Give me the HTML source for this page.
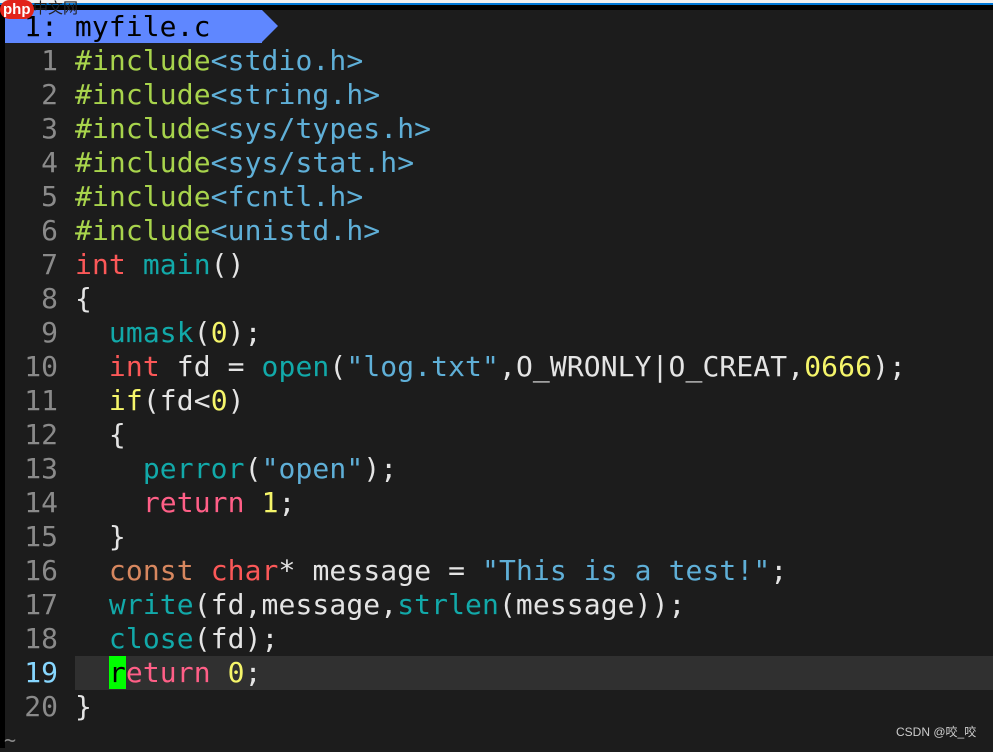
<!DOCTYPE html>
<html><head><meta charset="utf-8"><style>
body{margin:0;width:993px;height:748px;overflow:hidden;background:#1c1c1c;position:relative;font-family:"DejaVu Sans Mono","Liberation Mono",monospace;}
.top{position:absolute;left:0;top:0;width:993px;height:3px;background:#f0f0f0}
.top2{position:absolute;left:0;top:3px;width:993px;height:2px;background:#0078d7}
.top3{position:absolute;left:0;top:5px;width:993px;height:5px;background:#000}
.lb{position:absolute;left:0;top:5px;width:5px;height:743px;background:#000}
.tab{position:absolute;left:5px;top:10px;height:33px;width:257px;background:#5f87ff;color:#000;font-size:28px;line-height:33px;padding-left:19px;box-sizing:border-box;letter-spacing:0.1px}
.arr{position:absolute;left:262px;top:10px;width:0;height:0;border-top:16.5px solid transparent;border-bottom:16.5px solid transparent;border-left:16px solid #5f87ff}
.cur{position:absolute;left:75px;top:656px;width:918px;height:34px;background:#303030}
.l{position:absolute;left:0;height:34px;line-height:34px;font-size:28px;white-space:pre;color:#e4e4e4;letter-spacing:0.1px}
.n{display:inline-block;width:58px;text-align:right;color:#8a8a8a;margin-right:17px;letter-spacing:0}
.g{color:#a8d44c}.b{color:#5fafd7}.r{color:#fb5858}.t{color:#12a9a9}.y{color:#f5f56a}.p{color:#ff5f87}.o{color:#d7875f}
.logo{position:absolute;left:0;top:0;font:bold 15px "Liberation Sans",sans-serif;color:#fff;background:#e2231a;border-radius:10px;padding:0 3px;line-height:19px}
.logo2{position:absolute;left:33px;top:1px;font:15px "Liberation Sans","Noto Sans CJK SC",sans-serif;color:#222;line-height:16px}
.wm{position:absolute;left:896px;top:723px;font:12px "Liberation Sans","Noto Sans CJK SC",sans-serif;color:#ccc}
.tl{position:absolute;left:4px;top:728px;color:#888;font-size:20px}
</style></head><body>
<div class="top"></div><div class="top2"></div><div class="top3"></div><div class="lb"></div>
<div class="tab">1: myfile.c</div><div class="arr"></div>
<div class="cur"></div>
<div class="l" style="top:44px"><span class="n">1</span><span class="g">#include</span><span class="b">&lt;stdio.h&gt;</span></div>
<div class="l" style="top:78px"><span class="n">2</span><span class="g">#include</span><span class="b">&lt;string.h&gt;</span></div>
<div class="l" style="top:112px"><span class="n">3</span><span class="g">#include</span><span class="b">&lt;sys/types.h&gt;</span></div>
<div class="l" style="top:146px"><span class="n">4</span><span class="g">#include</span><span class="b">&lt;sys/stat.h&gt;</span></div>
<div class="l" style="top:180px"><span class="n">5</span><span class="g">#include</span><span class="b">&lt;fcntl.h&gt;</span></div>
<div class="l" style="top:214px"><span class="n">6</span><span class="g">#include</span><span class="b">&lt;unistd.h&gt;</span></div>
<div class="l" style="top:248px"><span class="n">7</span><span class="r">int</span> <span class="t">main</span>()</div>
<div class="l" style="top:282px"><span class="n">8</span>{</div>
<div class="l" style="top:316px"><span class="n">9</span>  <span class="t">umask</span>(<span class="y">0</span>);</div>
<div class="l" style="top:350px"><span class="n">10</span>  <span class="r">int</span> fd = <span class="t">open</span>(<span class="b">"log.txt"</span>,O_WRONLY|O_CREAT,<span class="y">0666</span>);</div>
<div class="l" style="top:384px"><span class="n">11</span>  <span class="y">if</span>(fd&lt;<span class="y">0</span>)</div>
<div class="l" style="top:418px"><span class="n">12</span>  {</div>
<div class="l" style="top:452px"><span class="n">13</span>    <span class="t">perror</span>(<span class="b">"open"</span>);</div>
<div class="l" style="top:486px"><span class="n">14</span>    <span class="p">return</span> <span class="y">1</span>;</div>
<div class="l" style="top:520px"><span class="n">15</span>  }</div>
<div class="l" style="top:554px"><span class="n">16</span>  <span class="o">const</span> <span class="r">char</span>* message = <span class="b">"This is a test!"</span>;</div>
<div class="l" style="top:588px"><span class="n">17</span>  <span class="t">write</span>(fd,message,<span class="t">strlen</span>(message));</div>
<div class="l" style="top:622px"><span class="n">18</span>  <span class="t">close</span>(fd);</div>
<div class="l" style="top:656px"><span class="n" style="color:#87d7ff">19</span>  <span style="background:#00ff00;color:#000">r</span><span class="p">eturn</span> <span class="y">0</span>;</div>
<div class="l" style="top:690px"><span class="n">20</span>}</div>
<div class="tl">~</div>
<div class="logo">php</div><div class="logo2">中文网</div>
<div class="wm">CSDN @咬_咬</div>
</body></html>
